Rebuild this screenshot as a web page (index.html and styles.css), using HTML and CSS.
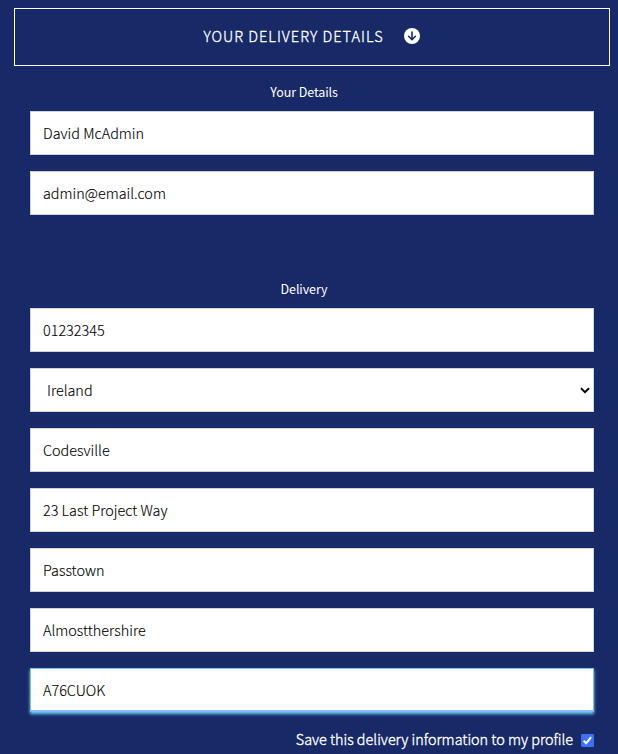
FILE: index.html
```html
<!DOCTYPE html>
<html lang="en">
<head>
<meta charset="utf-8">
<title>Your Delivery Details</title>
<link rel="stylesheet" href="styles.css">
</head>
<body>
<main class="page">
  <button class="toggle" type="button">
    <span>YOUR DELIVERY DETAILS</span>
    <svg class="toggle-icon" viewBox="0 0 16 16" aria-hidden="true"><circle cx="8" cy="8" r="8" fill="#fff"/><path d="M8 4v7.6M4.6 8.3 8 11.7l3.4-3.4" fill="none" stroke="#182968" stroke-width="1.6" stroke-linecap="round" stroke-linejoin="round"/></svg>
  </button>
  <form class="form">
    <fieldset class="group details">
      <legend class="legend">Your Details</legend>
      <input class="field name" type="text" value="David McAdmin" aria-label="Full name">
      <input class="field email" type="text" value="admin@email.com" aria-label="Email">
    </fieldset>
    <fieldset class="group">
      <legend class="legend">Delivery</legend>
      <input class="field phone" type="text" value="01232345" aria-label="Phone">
      <div class="select-wrap">
        <select class="field country" aria-label="Country"><option>Ireland</option></select>
        <svg class="chevron" viewBox="0 0 10 7" aria-hidden="true"><path d="M1 1.3 5 5.1 9 1.3" fill="none" stroke="#000" stroke-width="2"/></svg>
      </div>
      <input class="field town" type="text" value="Codesville" aria-label="Town">
      <input class="field street" type="text" value="23 Last Project Way" aria-label="Street address 1">
      <input class="field street2" type="text" value="Passtown" aria-label="Street address 2">
      <input class="field county" type="text" value="Almostthershire" aria-label="County">
      <input class="field postcode is-focused" type="text" value="A76CUOK" aria-label="Postcode">
    </fieldset>
    <label class="save">
      <span class="save-text">Save this delivery information to my profile</span>
      <input class="save-input" type="checkbox" checked>
      <svg class="check" viewBox="0 0 13 13" aria-hidden="true"><rect width="13" height="13" rx="1.2" fill="#3b70f7"/><path d="m2.7 6.8 2.4 2.5 5-6.2" fill="none" stroke="#fff" stroke-width="2"/></svg>
    </label>
  </form>
</main>
</body>
</html>
```
FILE: styles.css
```css
* { box-sizing: border-box; }

body {
  margin: 0;
  background: #182968;
  color: #fff;
  font-family: "Source Sans Pro", "Noto Sans CJK JP", sans-serif;
  overflow: hidden;
}

.page { padding: 8px 8px 0 14px; }

.toggle {
  display: flex;
  align-items: center;
  justify-content: center;
  gap: 20px;
  width: 100%;
  height: 58px;
  padding: 0 1px 2px 0;
  border: 1px solid #fff;
  background: transparent;
  color: #fff;
  font: 300 14.5px/24px "Source Sans Pro", "Noto Sans CJK JP", sans-serif;
  letter-spacing: 1px;
  -webkit-text-stroke: 0.3px #fff;
}

.toggle-icon { width: 16px; height: 16px; }

.form { padding: 17px 16px 0; }

.group {
  display: flex;
  flex-direction: column;
  gap: 16px;
  margin: 0;
  padding: 0;
  border: 0;
}

.details { margin-bottom: 65px; }

.legend {
  width: 100%;
  height: 28px;
  padding: 0 16px 0 0;
  font-size: 12.5px;
  font-weight: 400;
  letter-spacing: -0.1px;
  line-height: 18px;
  text-align: center;
}

.field {
  display: block;
  width: 100%;
  height: 44px;
  padding: 0 12px 2px;
  border: 1px solid #ced4da;
  border-radius: 0;
  outline: 0;
  background: #fff;
  color: #000;
  font: 300 14.4px/24px "Source Sans Pro", "Noto Sans CJK JP", sans-serif;
  -webkit-text-stroke: 0.12px #000;
}

.is-focused {
  border-color: #80bdff;
  box-shadow: inset 0 -1px 0 #80bdff, 0 2px 3px #6fd0f5;
}

.select-wrap { position: relative; }

.country { appearance: none; padding: 0 16px; }

.chevron {
  position: absolute;
  right: 4px;
  top: 19px;
  width: 10px;
  height: 7px;
}

.save {
  display: flex;
  align-items: center;
  justify-content: flex-end;
  gap: 8px;
  height: 24px;
  margin-top: 16px;
  font-size: 14.4px;
  font-weight: 300;
  line-height: 24px;
  -webkit-text-stroke: 0.35px #fff;
}

.save-text { margin-top: -2px; }
.save-input { display: none; }
.check { width: 13px; height: 13px; }
```
